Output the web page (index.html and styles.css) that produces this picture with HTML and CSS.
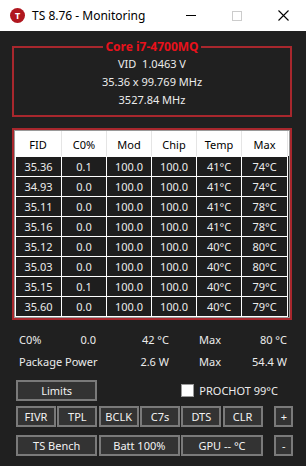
FILE: index.html
```html
<!DOCTYPE html>
<html lang="en">
<head>
    <meta charset="UTF-8">
    <title>TS 8.76 - Monitoring</title>
    <link rel="stylesheet" href="styles.css">
</head>
<body>
    <div class="titlebar">
        <span class="app-icon">T</span>
        <span class="title">TS 8.76 - Monitoring</span>
        <div class="controls">
            <span class="ctl ctl-min"></span>
            <span class="ctl ctl-max"></span>
            <span class="ctl ctl-close">
                <svg width="11" height="11" viewBox="0 0 11 11"><path d="M0.5 0.5L10.5 10.5M10.5 0.5L0.5 10.5" stroke="#000" stroke-width="1.1" fill="none"/></svg>
            </span>
        </div>
    </div>

    <fieldset class="cpu-box">
        <legend>Core i7-4700MQ</legend>
        <div class="cpu-line">VID&nbsp; 1.0463 V</div>
        <div class="cpu-line">35.36 x 99.769 MHz</div>
        <div class="cpu-line">3527.84 MHz</div>
    </fieldset>

    <div class="list-box">
        <div class="list-inner">
            <div class="list-header">
                <span class="col-1">FID</span>
                <span>C0%</span>
                <span>Mod</span>
                <span>Chip</span>
                <span>Temp</span>
                <span class="col-6">Max</span>
            </div>
            <div class="list-rows">
                <span>35.36</span><span>0.1</span><span>100.0</span><span>100.0</span><span>41°C</span><span>74°C</span>
                <span>34.93</span><span>0.0</span><span>100.0</span><span>100.0</span><span>41°C</span><span>74°C</span>
                <span>35.11</span><span>0.0</span><span>100.0</span><span>100.0</span><span>41°C</span><span>78°C</span>
                <span>35.16</span><span>0.0</span><span>100.0</span><span>100.0</span><span>41°C</span><span>78°C</span>
                <span>35.12</span><span>0.0</span><span>100.0</span><span>100.0</span><span>40°C</span><span>80°C</span>
                <span>35.03</span><span>0.0</span><span>100.0</span><span>100.0</span><span>40°C</span><span>80°C</span>
                <span>35.15</span><span>0.1</span><span>100.0</span><span>100.0</span><span>40°C</span><span>79°C</span>
                <span>35.60</span><span>0.0</span><span>100.0</span><span>100.0</span><span>40°C</span><span>79°C</span>
            </div>
        </div>
    </div>

    <div class="stats">
        <span>C0%</span>
        <span class="num">0.0</span>
        <span class="num">42 °C</span>
        <span class="stat-max">Max</span>
        <span class="num">80 °C</span>

        <span class="wide">Package Power</span>
        <span class="num">2.6 W</span>
        <span class="stat-max">Max</span>
        <span class="num">54.4 W</span>
    </div>

    <div class="buttons">
        <button class="btn span-2">Limits</button>
        <label class="prochot"><span class="check"></span>PROCHOT 99°C</label>

        <button class="btn row-2">FIVR</button>
        <button class="btn row-2">TPL</button>
        <button class="btn row-2">BCLK</button>
        <button class="btn row-2">C7s</button>
        <button class="btn row-2">DTS</button>
        <button class="btn row-2">CLR</button>
        <button class="btn row-2 small">+</button>

        <button class="btn row-3 span-2">TS Bench</button>
        <button class="btn row-3 span-2">Batt 100%</button>
        <button class="btn row-3 span-2">GPU -- °C</button>
        <button class="btn row-3 small">-</button>
    </div>
</body>
</html>
```

FILE: styles.css
```css
html, body {
    margin: 0;
    padding: 0;
}
body {
    width: 306px;
    height: 466px;
    overflow: hidden;
    background: #202020;
    color: #ececec;
    font-family: "Noto Sans", sans-serif;
    font-size: 11px;
}

/* title bar */
.titlebar {
    height: 31px;
    background: #fff;
    color: #000;
    display: flex;
    align-items: center;
    font-size: 12px;
}
.app-icon {
    margin-left: 10px;
    width: 15px;
    height: 15px;
    border-radius: 50%;
    background: #b0171f;
    color: #fff;
    font-weight: bold;
    font-size: 9px;
    line-height: 15px;
    text-align: center;
}
.title {
    margin-left: 7px;
}
.controls {
    margin-left: auto;
    display: flex;
}
.ctl {
    width: 46px;
    height: 31px;
    display: flex;
    align-items: center;
    justify-content: center;
}
.ctl-min::before {
    content: "";
    width: 10px;
    height: 1px;
    background: #000;
}
.ctl-max::before {
    content: "";
    width: 8px;
    height: 8px;
    border: 1px solid #cccccc;
}

/* cpu group box */
.cpu-box {
    box-sizing: border-box;
    width: 280px;
    margin: 9px 0 0 12px;
    padding: 1px 0 6px;
    border: 2px solid #a8272d;
    min-inline-size: 0;
    text-align: center;
}
.cpu-box legend {
    margin: 0 auto;
    padding: 0 2px;
    color: #e8111b;
    font-weight: bold;
    font-size: 12px;
    line-height: 14px;
}
.cpu-line {
    line-height: 18px;
}

/* monitoring list */
.list-box {
    box-sizing: border-box;
    width: 280px;
    margin: 11px 0 0 12px;
    border: 2px solid #a8272d;
}
.list-inner {
    border: 1px solid #9a9a9a;
    background: #1e1e1e;
}
.list-header {
    display: flex;
    height: 25px;
    background: #fff;
    color: #000;
}
.list-header span {
    box-sizing: border-box;
    width: 45px;
    border-right: 1px solid #e5e5e5;
    text-align: center;
    line-height: 27px;
}
.list-header .col-1 {
    width: 47px;
}
.list-header .col-6 {
    width: 46px;
}
.list-rows {
    display: grid;
    grid-template-columns: 45px 44px 44px 44px 44px 45px;
    grid-auto-rows: 19px;
    gap: 1px;
    padding: 1px;
    width: fit-content;
    background: #fff;
}
.list-rows span {
    background: #1e1e1e;
    text-align: center;
    line-height: 19px;
}

/* stats */
.stats {
    display: grid;
    grid-template-columns: 50px 27px 73px 30px 30px 58px;
    grid-auto-rows: 22px;
    align-items: center;
    margin: 8px 0 0 19px;
    white-space: nowrap;
}
.stats .num {
    text-align: right;
}
.stats .wide {
    grid-column: span 2;
}
.stats .stat-max {
    grid-column-start: 5;
}

/* buttons */
.buttons {
    display: grid;
    grid-template-columns: repeat(6, 40px) 9px 19px;
    grid-template-rows: 21px 5px 21px 8px 21px;
    column-gap: 1.33px;
    margin: 8px 0 0 16px;
}
.btn {
    box-sizing: border-box;
    margin: 0;
    padding: 0;
    border: 2px solid #7a7a7a;
    background: #333333;
    color: #f2f2f2;
    font-family: inherit;
    font-size: 11px;
}
.span-2 {
    grid-column: span 2;
}
.row-2 {
    grid-row: 3;
}
.row-3 {
    grid-row: 5;
}
.small {
    grid-column: 8;
}
.prochot {
    grid-column: 5 / span 4;
    grid-row: 1;
    display: flex;
    align-items: center;
    gap: 5px;
    white-space: nowrap;
}
.check {
    box-sizing: border-box;
    width: 13px;
    height: 13px;
    background: #fff;
    border: 1px solid #999;
}
```
